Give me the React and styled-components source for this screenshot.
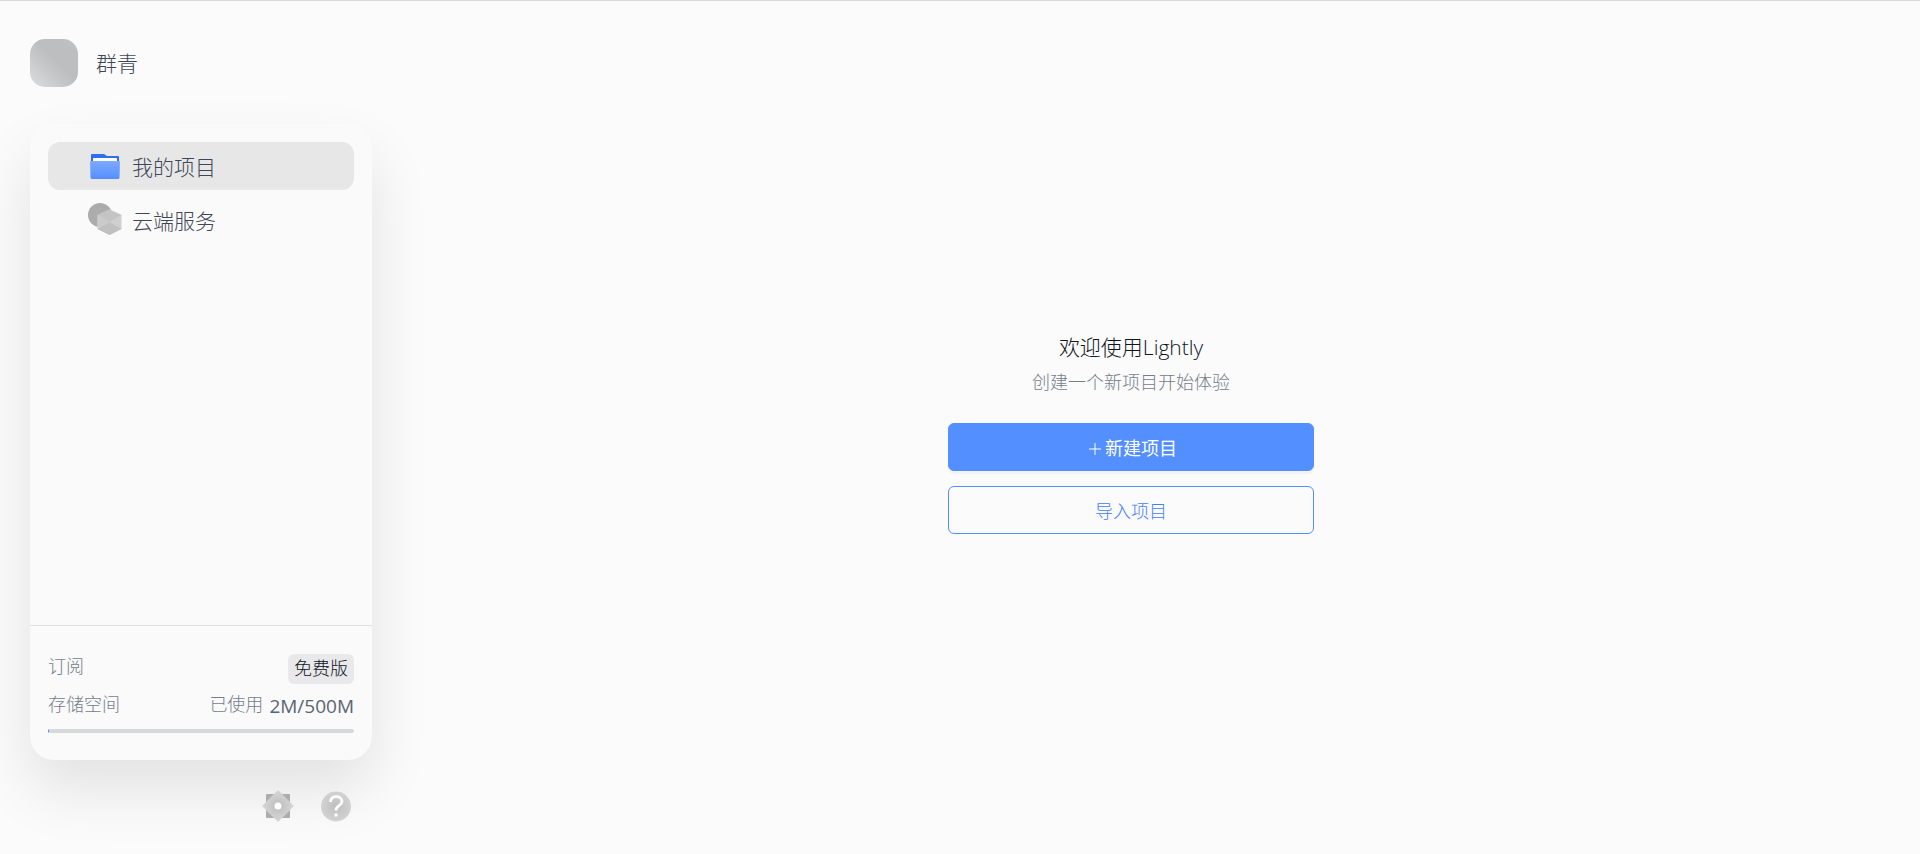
import React from "react";
import styled, { createGlobalStyle } from "styled-components";

const GlobalStyle = createGlobalStyle`
  * {
    box-sizing: border-box;
  }

  body {
    margin: 0;
    background: #fbfbfb;
    color: #3f4757;
    font-family: "Open Sans", "Noto Sans CJK SC", sans-serif;
    font-weight: 300;
  }

  button {
    font: inherit;
    cursor: pointer;
  }
`;

const Page = styled.div`
  display: flex;
  min-height: 100vh;
  border-top: 1px solid #d9d9d9;
`;

const Sidebar = styled.aside`
  display: flex;
  flex-direction: column;
  flex: 0 0 402px;
  padding: 38px 30px 31px;
`;

const User = styled.div`
  display: flex;
  align-items: center;
  gap: 18px;
  height: 48px;
  font-size: 21px;
`;

const UserName = styled.span`
  padding-bottom: 2px;
`;

const Avatar = styled.div`
  width: 48px;
  height: 48px;
  border-radius: 15px;
  background: linear-gradient(45deg, #dcddde 0%, #bcbdbe 55%, #bfc0c1 100%);
`;

const Card = styled.div`
  display: flex;
  flex-direction: column;
  flex: 1;
  margin-top: 37px;
  border-radius: 24px;
  background: #fafafa;
  box-shadow: 0 30px 60px rgba(0, 0, 0, 0.1);
`;

const Menu = styled.nav`
  display: flex;
  flex-direction: column;
  flex: 1;
  gap: 6px;
  padding: 18px;
`;

const MenuItem = styled.a`
  display: flex;
  align-items: center;
  gap: 10px;
  height: 48px;
  padding-left: 40px;
  border-radius: 12px;
  background: ${(props) => (props.$active ? "#e7e7e7" : "transparent")};
  color: #3f4757;
  font-size: 21px;
  text-decoration: none;
`;

const Plan = styled.div`
  padding: 28px 18px 27px;
  border-top: 1px solid #e1e1e1;
`;

const PlanRow = styled.div`
  display: flex;
  align-items: flex-start;
  justify-content: space-between;
  height: 30px;
  margin-bottom: 8px;
  color: #747d8b;
  font-size: 18px;
  line-height: 24px;

  & + & {
    margin-bottom: 7px;
  }
`;

const Badge = styled.span`
  height: 30px;
  padding: 0 6px;
  border-radius: 6px;
  background: #e9e9eb;
  color: #10141c;
  line-height: 28px;
`;

const Usage = styled.span`
  display: flex;
  gap: 6px;
`;

const Amount = styled.span`
  color: #5a6473;
  font-size: 19px;
  font-weight: 400;
  line-height: 28px;
`;

const Track = styled.div`
  height: 4px;
  border-radius: 2px;
  background: #d7d8db;
  overflow: hidden;
`;

const Bar = styled.div`
  height: 100%;
  background: #2f86ff;
`;

const Tools = styled.div`
  display: flex;
  justify-content: flex-end;
  gap: 24px;
  padding: 29px 19px 0;
`;

const IconButton = styled.button`
  display: flex;
  padding: 0;
  border: none;
  background: none;
`;

const Main = styled.main`
  display: flex;
  flex-direction: column;
  align-items: center;
  justify-content: center;
  flex: 1;
  padding: 24px 60px 0 0;
`;

const Title = styled.h1`
  margin: 0;
  color: #10141c;
  font-size: 21px;
  font-weight: 300;
  line-height: 32px;
`;

const Subtitle = styled.p`
  margin: 4px 0 26px;
  color: #747d8b;
  font-size: 18px;
  line-height: 30px;
`;

const Button = styled.button`
  width: 366px;
  height: 48px;
  margin-bottom: 15px;
  border: 1px solid #548fff;
  border-radius: 6px;
  background: ${(props) => (props.$primary ? "#548fff" : "transparent")};
  box-shadow: ${(props) => (props.$primary ? "0 3px 0 rgba(0, 0, 0, 0.03)" : "none")};
  color: ${(props) => (props.$primary ? "#fff" : "#3f80ff")};
  font-size: 18px;
  font-weight: ${(props) => (props.$primary ? 400 : 300)};
`;

const PlusIcon = styled.svg`
  margin: 0 4px;
`;

function FolderIcon() {
  return (
    <svg width="34" height="34" viewBox="0 0 34 34" aria-hidden="true">
      <defs>
        <linearGradient id="folder" x1="0" y1="0" x2="0" y2="1">
          <stop offset="0" stopColor="#7eaaff" />
          <stop offset="1" stopColor="#548fff" />
        </linearGradient>
      </defs>
      <path d="M4 5h12l3 2h11q1 0 1 1v20H3V6q0-1 1-1z" fill="#306fea" />
      <rect x="5" y="9" width="24" height="8" rx="1" fill="#fff" />
      <path d="M2 13q0-1 1-1h28q1 0 1 1l-.5 15.500q0 1.500-1.500 1.500H4q-1.500 0-1.500-1.500z" fill="url(#folder)" />
    </svg>
  );
}

function CloudIcon() {
  return (
    <svg width="34" height="34" viewBox="0 0 34 34" aria-hidden="true">
      <circle cx="12" cy="12" r="12" fill="#acacac" />
      <path d="M21.500 6.500L33.500 12v14l-12 6-12-6V12z" fill="#d0d0d0" />
      <path d="M21.500 6.500L33.500 12l-12 7-12-7z" fill="#c4c4c4" />
      <path d="M9.500 26l12-7 12 7-12 6z" fill="#c0c0c0" />
      <path d="M9.500 12l12 7-12 7z" fill="#cbcbcb" />
    </svg>
  );
}

function SettingsIcon() {
  return (
    <svg width="34" height="34" viewBox="0 0 34 34" aria-hidden="true">
      <defs>
        <radialGradient id="gear">
          <stop offset="0" stopColor="#bcbcbc" />
          <stop offset="1" stopColor="#d8d8d8" />
        </radialGradient>
      </defs>
      <rect x="5" y="5" width="24" height="24" rx="1" fill="#adadad" />
      <path d="M17 1l16 16-16 16L1 17z" fill="url(#gear)" />
      <circle cx="17" cy="17" r="3.500" fill="#fff" />
    </svg>
  );
}

function HelpIcon() {
  return (
    <svg width="34" height="34" viewBox="0 0 34 34" aria-hidden="true">
      <defs>
        <radialGradient id="help">
          <stop offset="0" stopColor="#bebebe" />
          <stop offset="1" stopColor="#d2d2d2" />
        </radialGradient>
      </defs>
      <circle cx="17" cy="17.500" r="15" fill="url(#help)" />
      <path d="M11.500 13c0-7.500 11.500-7 11.500-.5 0 4.500-6 4-6 9" fill="none" stroke="#fff" strokeWidth="2.800" />
      <rect x="15.500" y="24.500" width="3" height="3" fill="#fff" />
    </svg>
  );
}

function App() {
  const used = 2;
  const total = 500;

  return (
    <>
      <GlobalStyle />
      <Page>
        <Sidebar>
          <User>
            <Avatar />
            <UserName>群青</UserName>
          </User>
          <Card>
            <Menu>
              <MenuItem href="#projects" $active>
                <FolderIcon />
                我的项目
              </MenuItem>
              <MenuItem href="#cloud">
                <CloudIcon />
                云端服务
              </MenuItem>
            </Menu>
            <Plan>
              <PlanRow>
                <span>订阅</span>
                <Badge>免费版</Badge>
              </PlanRow>
              <PlanRow>
                <span>存储空间</span>
                <Usage>
                  已使用
                  <Amount>{used}M/{total}M</Amount>
                </Usage>
              </PlanRow>
              <Track>
                <Bar style={{ width: `${(used / total) * 100}%` }} />
              </Track>
            </Plan>
          </Card>
          <Tools>
            <IconButton type="button" aria-label="设置">
              <SettingsIcon />
            </IconButton>
            <IconButton type="button" aria-label="帮助">
              <HelpIcon />
            </IconButton>
          </Tools>
        </Sidebar>
        <Main>
          <Title>欢迎使用Lightly</Title>
          <Subtitle>创建一个新项目开始体验</Subtitle>
          <Button type="button" $primary>
            <PlusIcon width="12" height="12" viewBox="0 0 12 12" aria-hidden="true">
              <path d="M6 0v12M0 6h12" stroke="#fff" />
            </PlusIcon>
            新建项目
          </Button>
          <Button type="button">导入项目</Button>
        </Main>
      </Page>
    </>
  );
}

export default App;
